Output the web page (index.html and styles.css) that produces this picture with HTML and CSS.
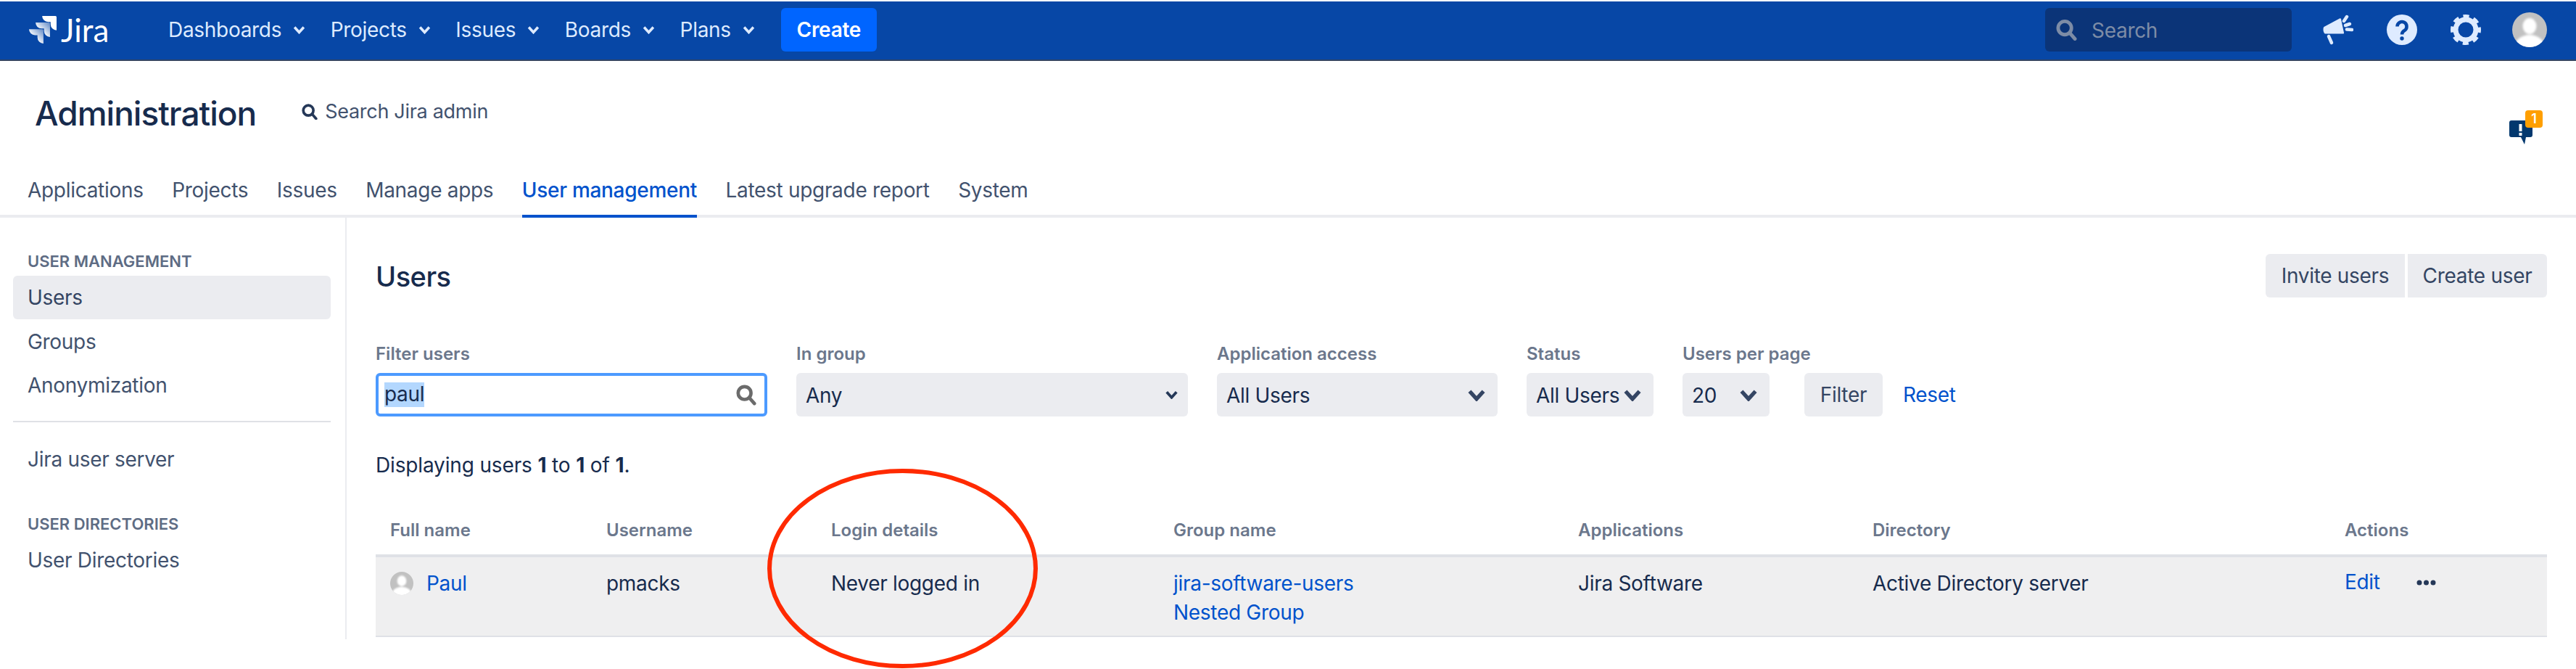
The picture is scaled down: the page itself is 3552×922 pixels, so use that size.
FILE: index.html
```html
<!DOCTYPE html>
<html lang="en">
<head>
<meta charset="utf-8">
<title>Users - Jira Administration</title>
<link rel="stylesheet" href="styles.css">
</head>
<body>
<svg class="sprite" width="0" height="0" aria-hidden="true">
  <defs>
    <linearGradient id="tile" x1="1" y1="0" x2="0.35" y2="0.65">
      <stop offset="0" stop-color="#fff" stop-opacity=".35"/>
      <stop offset="1" stop-color="#fff"/>
    </linearGradient>
    <clipPath id="avatar-clip"><circle cx="24" cy="24" r="24"/></clipPath>
    <filter id="soft"><feGaussianBlur stdDeviation="1.4"/></filter>
    <symbol id="chev" viewBox="0 0 24 16"><polyline points="3,3 12,13 21,3" fill="none" stroke="currentColor" stroke-width="5"/></symbol>
    <symbol id="find" viewBox="0 0 30 30"><circle cx="12.5" cy="12.5" r="9.5" fill="none" stroke="currentColor" stroke-width="5"/><line x1="20" y1="20" x2="27" y2="28" stroke="currentColor" stroke-width="5" stroke-linecap="round"/></symbol>
    <symbol id="person" viewBox="0 0 48 48"><g clip-path="url(#avatar-clip)"><rect width="48" height="48" fill="#c1c1c1"/><g filter="url(#soft)" fill="#fff"><ellipse cx="24" cy="19" rx="9.5" ry="11"/><ellipse cx="24" cy="46" rx="20" ry="15"/></g></g></symbol>
  </defs>
</svg>

<header class="topbar">
  <a class="brand">
    <svg class="brand-mark" viewBox="0 0 24 24">
      <path fill="url(#tile)" d="M11.571 11.513H0a5.218 5.218 0 0 0 5.232 5.215h2.13v2.057A5.215 5.215 0 0 0 12.575 24V12.518a1.005 1.005 0 0 0-1.005-1.005z"/>
      <path fill="url(#tile)" d="M17.294 5.757H5.736a5.215 5.215 0 0 0 5.215 5.214h2.129v2.058a5.218 5.218 0 0 0 5.215 5.214V6.758a1.001 1.001 0 0 0-1.001-1.001z"/>
      <path fill="#fff" d="M23.013 0H11.455a5.215 5.215 0 0 0 5.215 5.215h2.129v2.057A5.215 5.215 0 0 0 24 12.483V1.005A1.001 1.001 0 0 0 23.013 0z"/>
    </svg>
    <span class="brand-name">Jira</span>
  </a>
  <nav class="topnav">
    <a class="topnav-item">Dashboards<svg class="topnav-chev"><use href="#chev"/></svg></a>
    <a class="topnav-item">Projects<svg class="topnav-chev"><use href="#chev"/></svg></a>
    <a class="topnav-item">Issues<svg class="topnav-chev"><use href="#chev"/></svg></a>
    <a class="topnav-item">Boards<svg class="topnav-chev"><use href="#chev"/></svg></a>
    <a class="topnav-item">Plans<svg class="topnav-chev"><use href="#chev"/></svg></a>
  </nav>
  <a class="create">Create</a>
  <div class="topsearch">
    <svg class="topsearch-icon"><use href="#find"/></svg>
    <span class="topsearch-text">Search</span>
  </div>
  <svg class="tool tool-megaphone" viewBox="0 0 42 42">
    <path d="M1.5 17 23 5.5c1-.5 1.7-.2 2 .8L29 25c.2 1-.3 1.5-1.2 1.5H3.5C.8 26.500-.5 19 1.500 17z" fill="#deebff"/>
    <g stroke="#deebff" stroke-width="4.500" stroke-linecap="round"><line x1="8" y1="30" x2="12" y2="39"/><line x1="29" y1="9" x2="33" y2="3"/><line x1="31" y1="15" x2="37" y2="13"/><line x1="33" y1="20.500" x2="40" y2="21"/></g>
  </svg>
  <svg class="tool tool-help" viewBox="0 0 42 42">
    <circle cx="21" cy="21" r="21" fill="#deebff"/>
    <path d="M14.500 16.500a6.500 6.500 0 1 1 10 5.500c-2.500 1.500-3.500 2.500-3.500 5.500" fill="none" stroke="#0747a6" stroke-width="4.600"/>
    <circle cx="21" cy="33" r="2.700" fill="#0747a6"/>
  </svg>
  <svg class="tool tool-gear" viewBox="0 0 42 42">
    <circle cx="21" cy="21" r="14" fill="none" stroke="#deebff" stroke-width="7"/>
    <circle cx="21" cy="21" r="18.300" fill="none" stroke="#deebff" stroke-width="5.400" stroke-dasharray="8 6.370" stroke-dashoffset="4"/>
  </svg>
  <svg class="tool-avatar"><use href="#person"/></svg>
</header>

<section class="admin-head">
  <div class="admin-title-row">
    <h1 class="admin-title">Administration</h1>
    <a class="admin-search"><svg class="admin-search-icon"><use href="#find"/></svg>Search Jira admin</a>
    <div class="notice">
      <svg class="notice-icon" viewBox="0 0 32 33">
        <path d="M3 0h26c2 0 3 1 3 3v17c0 2-1 3-3 3H23l-2 10-5-10H3c-2 0-3-1-3-3V3C0 1 1 0 3 0z" fill="#02386e"/>
        <rect x="13.500" y="5" width="4" height="10" fill="#fff"/><rect x="13.500" y="17" width="4" height="4" fill="#fff"/>
      </svg>
      <span class="notice-badge">1</span>
    </div>
  </div>
  <nav class="tabs">
    <a class="tab">Applications</a>
    <a class="tab">Projects</a>
    <a class="tab">Issues</a>
    <a class="tab">Manage apps</a>
    <a class="tab tab-active">User management</a>
    <a class="tab">Latest upgrade report</a>
    <a class="tab">System</a>
  </nav>
</section>

<div class="layout">
  <aside class="side">
    <h4 class="side-head">USER MANAGEMENT</h4>
    <a class="side-item side-item-active">Users</a>
    <a class="side-item">Groups</a>
    <a class="side-item">Anonymization</a>
    <hr class="side-rule">
    <a class="side-item side-item-solo">Jira user server</a>
    <h4 class="side-head side-head-next">USER DIRECTORIES</h4>
    <a class="side-item">User Directories</a>
  </aside>

  <main class="content">
    <div class="page-head">
      <h2 class="page-title">Users</h2>
      <div class="page-actions">
        <a class="btn btn-invite">Invite users</a>
        <a class="btn btn-create">Create user</a>
      </div>
    </div>

    <form class="filters">
      <div class="field field-wide">
        <label class="field-label">Filter users</label>
        <div class="filter-input"><span class="selected-text">paul</span><svg class="filter-input-icon"><use href="#find"/></svg></div>
      </div>
      <div class="field field-wide">
        <label class="field-label">In group</label>
        <div class="select select-any">Any<svg class="chev-small"><use href="#chev"/></svg></div>
      </div>
      <div class="field field-app">
        <label class="field-label">Application access</label>
        <div class="select select-low">All Users<svg class="chev-big"><use href="#chev"/></svg></div>
      </div>
      <div class="field field-status">
        <label class="field-label">Status</label>
        <div class="select select-low">All Users<svg class="chev-big"><use href="#chev"/></svg></div>
      </div>
      <div class="field field-page">
        <label class="field-label">Users per page</label>
        <div class="select select-low">20<svg class="chev-big"><use href="#chev"/></svg></div>
      </div>
      <div class="filter-actions">
        <a class="btn btn-filter">Filter</a>
        <a class="link reset">Reset</a>
      </div>
    </form>

    <p class="summary">Displaying users <b>1</b> to <b>1</b> of <b>1</b>.</p>

    <div class="grid grid-head">
      <div class="cell">Full name</div>
      <div class="cell">Username</div>
      <div class="cell">Login details</div>
      <div class="cell">Group name</div>
      <div class="cell">Applications</div>
      <div class="cell">Directory</div>
      <div class="cell">Actions</div>
    </div>
    <div class="grid grid-row">
      <div class="cell cell-user"><svg class="row-avatar"><use href="#person"/></svg><a class="link">Paul</a></div>
      <div class="cell">pmacks</div>
      <div class="cell">Never logged in</div>
      <div class="cell cell-stack"><a class="link">jira-software-users</a><a class="link">Nested Group</a></div>
      <div class="cell">Jira Software</div>
      <div class="cell">Active Directory server</div>
      <div class="cell cell-actions"><a class="link edit">Edit</a><svg class="more" viewBox="0 0 27 8"><circle cx="4" cy="4" r="3.500"/><circle cx="13.500" cy="4" r="3.500"/><circle cx="23" cy="4" r="3.500"/></svg></div>
    </div>
  </main>
</div>

<svg class="annotation" viewBox="0 0 373 275"><ellipse cx="186.500" cy="137.500" rx="183.500" ry="134.500"/></svg>
</body>
</html>
```

FILE: styles.css
```css
* { box-sizing: border-box; }

html, body { margin: 0; padding: 0; }

body {
  position: relative;
  width: 3552px;
  height: 922px;
  padding-top: 2px;
  overflow: hidden;
  background: #fff;
  color: #172b4d;
  font-family: "Inter", "Liberation Sans", sans-serif;
  font-size: 28px;
  letter-spacing: -0.3px;
  line-height: 40px;
}

.sprite { position: absolute; }

a { color: inherit; text-decoration: none; }

/* top bar */
.topbar {
  display: flex;
  align-items: center;
  height: 82px;
  padding: 0 40px 2px;
  background: #0747a6;
  border-bottom: 2px solid #344563;
  color: #deebff;
}

.brand { display: flex; align-items: center; width: 192px; }
.brand-mark { width: 38px; height: 38px; }
.brand-name {
  margin-left: 6px;
  color: #fff;
  font-family: "Lato", sans-serif;
  font-size: 44px;
  letter-spacing: 0;
  line-height: 48px;
}

.topnav { display: flex; gap: 34.5px; }
.topnav-item { display: flex; align-items: center; gap: 16px; }
.topnav-chev { width: 17px; height: 12px; color: #deebff; }

.create {
  display: flex;
  align-items: center;
  justify-content: center;
  width: 132px;
  height: 60px;
  margin-left: 36px;
  border-radius: 6px;
  background: #0065ff;
  color: #fff;
  font-weight: 600;
}

.topsearch {
  display: flex;
  align-items: center;
  gap: 20px;
  width: 340px;
  height: 60px;
  margin-left: auto;
  padding-left: 15px;
  border-radius: 6px;
  background: #0b3478;
  color: #7d8ca6;
}
.topsearch-icon { width: 29px; height: 30px; }
.topsearch-text { padding-top: 2px; }

.tool { width: 42px; height: 42px; }
.tool-megaphone { margin-left: 43px; }
.tool-help { margin-left: 46px; }
.tool-gear { margin-left: 46px; }
.tool-avatar { width: 48px; height: 48px; margin-left: 43px; }

/* administration header */
.admin-head { height: 216px; border-bottom: 4px solid #ebecf0; }

.admin-title-row {
  display: flex;
  align-items: center;
  height: 143px;
  padding: 0 46px 0 48px;
}

.admin-title {
  margin: 0;
  font-size: 46px;
  font-weight: 500;
  letter-spacing: -1px;
  line-height: 56px;
}

.admin-search {
  display: flex;
  align-items: center;
  gap: 10px;
  margin: 0 0 4px 63px;
  color: #42526e;
  font-size: 27px;
}
.admin-search-icon { width: 22px; height: 22px; color: #253858; }

.notice {
  position: relative;
  align-self: flex-start;
  width: 46px;
  height: 47px;
  margin: 68px 0 0 auto;
}
.notice-icon { position: absolute; left: 0; top: 14px; width: 32px; height: 33px; }
.notice-badge {
  position: absolute;
  right: 0;
  top: 0;
  width: 24px;
  height: 24px;
  border-radius: 4px;
  background: #ff9f00;
  color: #fff;
  font-size: 18px;
  font-weight: 600;
  line-height: 24px;
  text-align: center;
}

.tabs {
  display: flex;
  gap: 39.5px;
  height: 69px;
  padding-left: 38px;
  color: #42526e;
}
.tab { height: 73px; padding-top: 15px; }
.tab-active {
  border-bottom: 4px solid #0052cc;
  color: #0052cc;
  font-weight: 500;
}

/* body */
.layout { display: flex; }

.side {
  width: 478px;
  padding: 45px 20px 79px 18px;
  border-right: 2px solid #ebecf0;
  color: #42526e;
}

.side-head {
  margin: 0 0 5px 20px;
  color: #5e6c84;
  font-size: 22px;
  font-weight: 600;
  letter-spacing: 0;
  line-height: 30px;
}
.side-head-next { margin-top: 44px; }

.side-item {
  display: block;
  height: 60px;
  padding: 10px 20px;
  border-radius: 6px;
  line-height: 40px;
}
.side-item-active { margin-bottom: 1px; background: #ebecf0; color: #344563; }
.side-item-solo { margin-top: 21px; }

.side-rule {
  height: 2px;
  margin: 19px 0 0;
  border: 0;
  background: #dfe1e6;
}

.content { flex: 1; padding: 50px 40px 2px; }

.page-head { display: flex; align-items: center; justify-content: space-between; height: 60px; }
.page-title { margin: 2px 0 0; font-size: 38px; font-weight: 500; letter-spacing: -0.5px; line-height: 56px; }
.page-actions { display: flex; gap: 4px; }

.btn {
  display: flex;
  align-items: center;
  justify-content: center;
  height: 60px;
  background: #ebecf0;
  color: #344563;
}
.btn-invite { width: 192px; border-radius: 6px 0 0 6px; }
.btn-create { width: 192px; border-radius: 0 6px 6px 0; }
.btn-filter { width: 108px; border-radius: 6px; }

.filters { display: flex; gap: 40px; margin-top: 63px; }

.field-label {
  display: block;
  margin-bottom: 11px;
  color: #6b778c;
  font-size: 24px;
  font-weight: 600;
  letter-spacing: 0;
  line-height: 30px;
  white-space: nowrap;
}
.field-wide { width: 540px; }
.field-app { width: 387px; }
.field-status { width: 175px; }
.field-page { width: 120px; }

.filter-input {
  display: flex;
  align-items: center;
  justify-content: space-between;
  height: 60px;
  padding: 0 11px 0 8px;
  border: 4px solid #4c9aff;
  border-radius: 6px;
}
.selected-text { height: 34px; background: #b3d7fe; line-height: 32px; }
.filter-input-icon { width: 28px; height: 30px; color: #6b6b6b; }

.select {
  display: flex;
  align-items: center;
  justify-content: space-between;
  height: 60px;
  padding: 2px 16px 0 13px;
  border-radius: 6px;
  background: #ebecf0;
  line-height: 58px;
}
.select-low { margin-top: 2px; }
.chev-small { width: 19px; height: 12px; margin-right: -3px; margin-bottom: 2px; color: #253858; }
.chev-big { width: 26px; height: 17px; margin-bottom: 2px; color: #344563; }

.filter-actions {
  display: flex;
  align-items: center;
  gap: 28px;
  margin: 41px 0 0 8px;
}

.link { color: #0052cc; }

.summary { margin: 47px 0 0; letter-spacing: -0.15px; }
.summary b { font-weight: 700; }

.grid {
  display: grid;
  grid-template-columns: 298px 310px 472px 558px 406px 651px 299px;
}

.grid-head {
  margin-top: 55px;
  padding-bottom: 18px;
  border-bottom: 4px solid #dfe1e6;
  color: #6b778c;
  font-size: 24px;
  font-weight: 600;
  letter-spacing: 0;
  line-height: 30px;
}

.grid-row {
  height: 110px;
  padding: 16px 0 12px;
  border-bottom: 2px solid #dfe1e6;
  background: #efeff0;
}

.cell { padding-left: 20px; }
.cell-user { display: flex; align-items: flex-start; gap: 18px; }
.cell-stack { display: flex; flex-direction: column; }
.cell-actions { display: flex; align-items: flex-start; gap: 50px; }

.row-avatar { width: 32px; height: 32px; margin-top: 4px; }
.edit { margin-top: -2px; }
.more { width: 27px; height: 8px; margin-top: 15px; fill: #253858; }

/* hand-drawn annotation on top of the screenshot */
.annotation {
  position: absolute;
  left: 1058px;
  top: 646px;
  width: 373px;
  height: 275px;
  fill: none;
  stroke: #ff2a00;
  stroke-width: 6;
}
```
